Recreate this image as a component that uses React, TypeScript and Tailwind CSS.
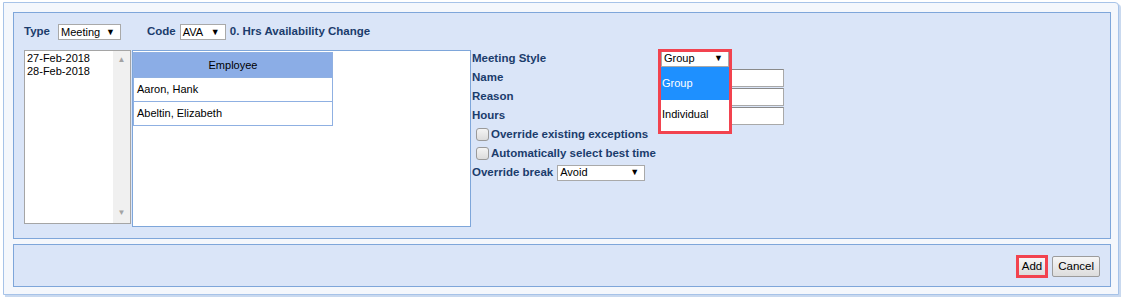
import React from "react";

const font = { fontFamily: '"Liberation Sans", Arial, sans-serif' };

function Sel({ value, w }: { value: string; w: string }) {
  return (
    <div className={`flex items-center justify-between h-[16px] border border-[#a9a9a9] bg-white pl-[2px] pr-[5px] text-[11px] font-normal text-black ${w}`}>
      <span>{value}</span>
      <span className="text-[9px] leading-none">▼</span>
    </div>
  );
}

function Check({ label }: { label: string }) {
  return (
    <div className="flex items-center h-[19px] pl-[4px]">
      <div className="w-[13px] h-[13px] rounded-[3px] border border-[#9a9a9a] bg-gradient-to-b from-[#f4f4f4] to-[#dcdcdc]" />
      <span className="ml-[2px] font-bold text-[#1b3c6c] text-[11.5px]">{label}</span>
    </div>
  );
}

export default function App() {
  return (
    <div className="w-[1121px] h-[298px] bg-white pt-[2px] pl-[3px]" style={font}>
      <div className="w-[1116px] h-[293px] border border-[#a7c3e8] rounded-tr-[4px] bg-[#f4f7fc] pt-[9px] pl-[9px] shadow-[2px_2px_0_#c9d9ef]">
        {/* top panel */}
        <div className="w-[1098px] h-[227px] border border-[#7ea6da] bg-[#dae5f8] pl-[10px] pt-[11px]">
          <div className="flex items-center h-[16px] text-[11.5px] font-bold text-[#1b3c6c]">
            <span>Type</span>
            <div className="ml-[8px]"><Sel value="Meeting" w="w-[63px]" /></div>
            <span className="ml-[26px]">Code</span>
            <div className="ml-[4px]"><Sel value="AVA" w="w-[46px]" /></div>
            <span className="ml-[4px]">0. Hrs Availability Change</span>
          </div>
          <div className="flex mt-[10px]">
            {/* date listbox */}
            <div className="w-[107px] h-[174px] border border-[#a5a5a5] bg-white flex">
              <div className="flex-1 pl-[2px] pt-[1px] text-[11px] leading-[13px] text-black">
                <div>27-Feb-2018</div>
                <div>28-Feb-2018</div>
              </div>
              <div className="w-[17px] bg-[#f0f0f0] flex flex-col items-center justify-between pt-[5px] pb-[6px] text-[8px] text-[#a3a3a3] leading-none">
                <span>▲</span>
                <span>▼</span>
              </div>
            </div>
            {/* employee box */}
            <div className="ml-[1px] w-[339px] h-[177px] border border-[#7ea6da] bg-white pt-[1px]">
              <div className="w-[200px] border border-[#8fb0e2] text-[11px] text-black">
                <div className="h-[24px] bg-[#8bade6] flex items-center justify-center">Employee</div>
                <div className="h-[24px] flex items-center pl-[3px] border-t border-[#8fb0e2]">Aaron, Hank</div>
                <div className="h-[24px] flex items-center pl-[3px] border-t border-[#8fb0e2]">Abeltin, Elizabeth</div>
              </div>
            </div>
            {/* form */}
            <div className="ml-[1px] -mt-[1px] text-[11.5px] font-bold text-[#1b3c6c]">
              <div className="flex items-center h-[19px]">
                <span className="w-[189px]">Meeting Style</span>
                <div className="relative">
                  <Sel value="Group" w="w-[68px]" />
                  <div className="absolute -left-[3px] -top-[2px] w-[74px] h-[85px] border-[3px] border-[#f2434f] z-10 bg-transparent flex flex-col">
                    <div className="h-[15px]" />
                    <div className="bg-white flex-1 flex flex-col font-normal text-[11px]">
                      <div className="h-[33px] bg-[#1e90ff] text-white flex items-center pl-[1px]">Group</div>
                      <div className="h-[30px] text-black flex items-center pl-[1px]">Individual</div>
                    </div>
                  </div>
                </div>
              </div>
              {["Name", "Reason", "Hours"].map((l) => (
                <div key={l} className="flex items-center h-[19px]">
                  <span className="w-[189px]">{l}</span>
                  <div className="w-[123px] h-[18px] border border-[#a9a9a9] border-t-[#8a8a8a] bg-white" />
                </div>
              ))}
              <Check label="Override existing exceptions" />
              <Check label="Automatically select best time" />
              <div className="flex items-center h-[19px]">
                <span>Override break</span>
                <div className="ml-[4px]"><Sel value="Avoid" w="w-[88px]" /></div>
              </div>
            </div>
          </div>
        </div>
        {/* bottom panel */}
        <div className="mt-[5px] w-[1098px] h-[43px] border border-[#7ea6da] bg-[#dae5f8] flex items-center justify-end pr-[10px] text-[11.5px] text-black">
          <div className="border-[3px] border-[#f2434f] mt-[2px]">
            <div className="h-[17px] px-[3px] flex items-center bg-gradient-to-b from-[#f6f6f6] to-[#dddddd]">Add</div>
          </div>
          <div className="ml-[4px] mt-[2px] h-[21px] px-[5px] flex items-center border border-[#9c9c9c] rounded-[2px] bg-gradient-to-b from-[#f6f6f6] to-[#dddddd]">Cancel</div>
        </div>
      </div>
    </div>
  );
}
